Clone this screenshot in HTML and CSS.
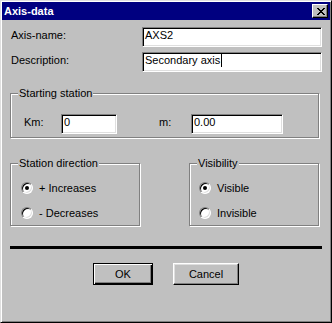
FILE: index.html
```html
<!DOCTYPE html>
<html lang="en">
<head>
    <meta charset="UTF-8">
    <title>Axis-data</title>
    <link rel="stylesheet" href="styles.css">
</head>
<body>
    <div class="window">
        <!-- 标题栏 -->
        <div class="titlebar">
            <span class="title">Axis-data</span>
            <span class="close">
                <svg width="8" height="7" viewBox="0 0 8 7">
                    <path d="M0 0h2v1h1v1h2v-1h1v-1h2v1h-1v1h-1v1h-1v1h1v1h1v1h1v1h-2v-1h-1v-1h-2v1h-1v1h-2v-1h1v-1h1v-1h1v-1h-1v-1h-1v-1h-1z" fill="#000"/>
                </svg>
            </span>
        </div>

        <div class="content">
            <div class="row first">
                <span class="label">Axis-name:</span>
                <div class="field wide">AXS2</div>
            </div>
            <div class="row second">
                <span class="label">Description:</span>
                <div class="field wide">Secondary axis<span class="caret"></span></div>
            </div>

            <!-- 起始站点 -->
            <div class="group station">
                <span class="caption">Starting station</span>
                <div class="km-row">
                    <span class="km-label">Km:</span>
                    <div class="field km">0</div>
                    <span class="m-label">m:</span>
                    <div class="field m">0.00</div>
                </div>
            </div>

            <div class="groups">
                <div class="group direction">
                    <span class="caption">Station direction</span>
                    <div class="option">
                        <span class="radio checked"></span>
                        <span>+ Increases</span>
                    </div>
                    <div class="option">
                        <span class="radio"></span>
                        <span>- Decreases</span>
                    </div>
                </div>
                <div class="group visibility">
                    <span class="caption">Visibility</span>
                    <div class="option">
                        <span class="radio checked"></span>
                        <span>Visible</span>
                    </div>
                    <div class="option">
                        <span class="radio"></span>
                        <span>Invisible</span>
                    </div>
                </div>
            </div>

            <div class="separator"></div>

            <div class="buttons">
                <div class="button default">OK</div>
                <div class="button cancel">Cancel</div>
            </div>
        </div>
    </div>
</body>
</html>
```

FILE: styles.css
```css
body {
    margin: 0;
    font-family: "Liberation Sans", Arial, sans-serif;
    font-size: 11px;
    color: #000;
}

/* 窗口外框 */
.window {
    box-sizing: border-box;
    width: 332px;
    height: 323px;
    padding: 1px;
    background-color: #c0c0c0;
    border: 1px solid;
    border-color: #dfdfdf #000 #000 #dfdfdf;
    box-shadow: inset 1px 1px #fff, inset -1px -1px #808080;
}

.titlebar {
    display: flex;
    align-items: center;
    justify-content: space-between;
    height: 18px;
    padding: 0 2px;
    background-color: #000080;
}

.title {
    color: #fff;
    font-weight: bold;
    line-height: 18px;
}

.close {
    box-sizing: border-box;
    display: flex;
    align-items: center;
    justify-content: center;
    width: 16px;
    height: 14px;
    padding-left: 1px;
    background-color: #c0c0c0;
    border: 1px solid;
    border-color: #fff #000 #000 #fff;
    box-shadow: inset -1px -1px #808080;
}

.content {
    padding: 0 8px;
}

/* 文本行 */
.row {
    display: flex;
    align-items: baseline;
    justify-content: space-between;
}

.row.first {
    margin-top: 7px;
}

.row.second {
    margin-top: 5px;
}

.label {
    padding-left: 1px;
}

.field {
    box-sizing: border-box;
    height: 20px;
    padding: 0 2px;
    line-height: 13px;
    background-color: #fff;
    white-space: nowrap;
    border: 1px solid;
    border-color: #808080 #fff #fff #808080;
    box-shadow: inset 1px 1px #000, inset -1px -1px #dfdfdf;
    padding-top: 1px;
}

.field.wide {
    width: 180px;
}

.caret {
    display: inline-block;
    width: 1px;
    height: 13px;
    margin-left: 1px;
    background-color: #000;
    vertical-align: top;
}

/* 分组框 */
.group {
    position: relative;
    border: 1px solid #808080;
    box-shadow: inset 1px 1px #fff, 1px 1px #fff;
}

.caption {
    position: absolute;
    top: -8px;
    left: 7px;
    padding: 0 1px;
    line-height: 14px;
    background-color: #c0c0c0;
}

.station {
    margin-top: 21px;
    padding: 20px 0 3px 13px;
    width: 309px;
    box-sizing: border-box;
}

.km-row {
    display: flex;
    align-items: baseline;
}

.km-label {
    width: 37px;
}

.field.km {
    width: 56px;
}

.m-label {
    width: 32px;
    margin-left: 42px;
}

.field.m {
    width: 92px;
}

.groups {
    display: flex;
    justify-content: space-between;
    width: 309px;
    margin-top: 25px;
}

.direction,
.visibility {
    padding: 16px 0 4px 10px;
}

.direction {
    width: 118px;
}

.visibility {
    width: 119px;
    padding-left: 9px;
}

.option {
    display: flex;
    align-items: center;
    height: 16px;
}

.option + .option {
    margin-top: 9px;
}

/* 单选按钮 */
.radio {
    position: relative;
    box-sizing: border-box;
    width: 12px;
    height: 12px;
    margin-right: 6px;
    border-radius: 50%;
    background-color: #fff;
    border: 1px solid;
    border-color: #808080 #fff #fff #808080;
    box-shadow: inset 1px 1px #000, inset -1px -1px #dfdfdf;
}

.radio.checked::after {
    content: "";
    position: absolute;
    top: 3px;
    left: 3px;
    width: 4px;
    height: 4px;
    border-radius: 50%;
    background-color: #000;
}

.separator {
    margin-top: 20px;
    height: 3px;
    background-color: #000;
}

/* 按钮 */
.buttons {
    display: flex;
    justify-content: center;
    align-items: flex-start;
    gap: 20px;
    margin-top: 14px;
}

.button {
    box-sizing: border-box;
    height: 22px;
    line-height: 20px;
    text-align: center;
    border: 1px solid;
    border-color: #fff #000 #000 #fff;
    box-shadow: inset -1px -1px #808080, inset 1px 1px #dfdfdf;
}

.button.default {
    width: 60px;
    border: 1px solid #000;
    box-shadow: inset 1px 1px #fff, inset -1px -1px #000, inset -2px -2px #808080;
}

.button.cancel {
    width: 66px;
}
```
